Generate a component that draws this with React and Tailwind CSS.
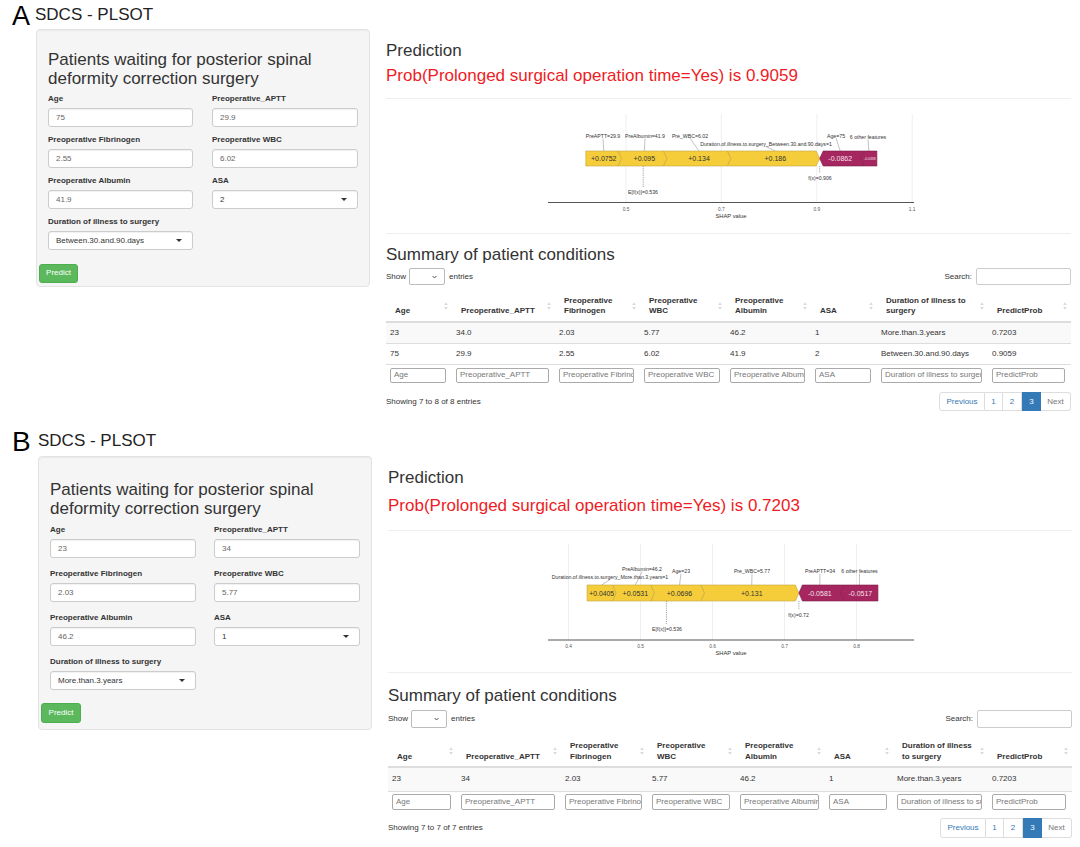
import React from "react";

const SVGFONT = "Liberation Sans, Arial, sans-serif";
const YEL = "#f5cd3b";
const YEL_S = "#c2a43c";
const MAG = "#a6265f";
const MAG_S = "#7d1c47";

function ForcePlot({ c }) {
  const X = c.x;
  const { t, b, d } = c;
  const m = (t + b) / 2;
  const sumPos = c.pos.reduce((s, p) => s + p.v, 0);
  let cur = c.f - sumPos;
  const posB = c.pos.map((p, i) => {
    const x0 = X(cur);
    cur += p.v;
    const x1 = X(cur);
    return { ...p, x0, x1, first: i === 0 };
  });
  cur = c.f;
  const negB = c.neg.map((p, i) => {
    const x0 = X(cur);
    cur += p.v;
    const x1 = X(cur);
    return { ...p, x0, x1, last: i === c.neg.length - 1 };
  });
  const all = [...posB, ...negB];
  const posPoly = (p) => {
    const pts = [];
    pts.push(p.first ? [p.x0, t] : [p.x0 - d, t]);
    pts.push([p.x1 - d, t], [p.x1, m], [p.x1 - d, b]);
    pts.push(p.first ? [p.x0, b] : [p.x0 - d, b]);
    if (!p.first) pts.push([p.x0, m]);
    return pts.map((q) => q.join(",")).join(" ");
  };
  const negPoly = (p) => {
    const pts = [[p.x0, m], [p.x0 + d, t]];
    if (p.last) pts.push([p.x1, t], [p.x1, b]);
    else pts.push([p.x1 + d, t], [p.x1, m], [p.x1 + d, b]);
    pts.push([p.x0 + d, b]);
    return pts.map((q) => q.join(",")).join(" ");
  };
  const ex = X(c.e);
  const fx = X(c.f);
  return (
    <svg
      width={c.w}
      height={c.h}
      viewBox={`${c.vx} ${c.vy} ${c.w} ${c.h}`}
      className={c.cls}
      fontFamily={SVGFONT}
    >
      {c.ticks.map((tk) => (
        <line key={"g" + tk} x1={X(tk)} x2={X(tk)} y1={c.gridTop} y2={c.axisY} stroke="#ebebeb" strokeWidth="0.8" />
      ))}
      <line x1={c.ax0} x2={c.ax1} y1={c.axisY} y2={c.axisY} stroke="#555" strokeWidth="1" />
      {c.ticks.map((tk) => (
        <text key={"t" + tk} x={X(tk)} y={c.tickY} fontSize="4.8" fill="#555" textAnchor="middle" dominantBaseline="central">
          {tk.toFixed(1)}
        </text>
      ))}
      <text x={c.titleX} y={c.titleY} fontSize="5.8" fill="#333" textAnchor="middle" dominantBaseline="central">
        SHAP value
      </text>
      {c.labels.map((l, i) => {
        const bar = all[l.bar];
        const bc = (bar.x0 + bar.x1) / 2;
        return (
          <g key={"l" + i}>
            <line x1={l.x} y1={l.y + 2.6} x2={bc} y2={t} stroke="#777" strokeWidth="0.45" />
            <text x={l.x} y={l.y} fontSize="5.2" fill="#333" textAnchor="middle" dominantBaseline="central">
              {l.t}
            </text>
          </g>
        );
      })}
      {posB.map((p, i) => (
        <polygon key={"p" + i} points={posPoly(p)} fill={YEL} stroke={YEL_S} strokeWidth="0.6" />
      ))}
      {negB.map((p, i) => (
        <polygon key={"n" + i} points={negPoly(p)} fill={MAG} stroke={MAG_S} strokeWidth="0.6" />
      ))}
      {posB.map((p, i) => (
        <text key={"pt" + i} x={(p.x0 + p.x1) / 2} y={m + 0.3} fontSize={p.fs || 7} fill="#333" textAnchor="middle" dominantBaseline="central">
          {p.s}
        </text>
      ))}
      {negB.map((p, i) => (
        <text key={"nt" + i} x={(p.x0 + p.x1) / 2 + (p.dx || 0)} y={m + 0.3} fontSize={p.fs || 7} fill="#f4e4ec" textAnchor="middle" dominantBaseline="central">
          {p.s}
        </text>
      ))}
      <line x1={ex} x2={ex} y1={b} y2={c.eLine} stroke="#666" strokeWidth="0.6" strokeDasharray="1.2 1" />
      <text x={c.eX} y={c.eY} fontSize="5.2" fill="#333" textAnchor="middle" dominantBaseline="central">
        E[f(x)]={c.e.toFixed(3)}
      </text>
      <line x1={fx} x2={fx} y1={b} y2={c.fLine} stroke="#666" strokeWidth="0.6" strokeDasharray="1 0.8" />
      <text x={c.fX} y={c.fY} fontSize="5.2" fill="#333" textAnchor="middle" dominantBaseline="central">
        {c.fText}
      </text>
    </svg>
  );
}

const plotA = {
  cls: "block ml-[154px]",
  vx: 540,
  vy: 99,
  w: 400,
  h: 134,
  x: (v) => 626 + (v - 0.5) * 477,
  ticks: [0.5, 0.7, 0.9, 1.1],
  gridTop: 114,
  axisY: 202.5,
  ax0: 548,
  ax1: 914,
  tickY: 209,
  titleX: 731,
  titleY: 216,
  t: 151,
  b: 166,
  d: 3.5,
  f: 0.906,
  e: 0.536,
  pos: [
    { v: 0.0752, s: "+0.0752" },
    { v: 0.095, s: "+0.095" },
    { v: 0.134, s: "+0.134" },
    { v: 0.186, s: "+0.186" },
  ],
  neg: [
    { v: 0.0862, s: "-0.0862" },
    { v: 0.0338, s: "-0.0338", fs: 3.4, dx: 1 },
  ],
  labels: [
    { t: "PreAPTT=29.9", x: 603, y: 136, bar: 0 },
    { t: "PreAlbumin=41.9", x: 645, y: 136, bar: 1 },
    { t: "Pre_WBC=6.02", x: 690, y: 135.5, bar: 2 },
    { t: "Duration.of.illness.to.surgery_Between.30.and.90.days=1", x: 766, y: 144, bar: 3 },
    { t: "Age=75", x: 836, y: 135.5, bar: 4 },
    { t: "6 other features", x: 868, y: 137, bar: 5 },
  ],
  eLine: 187,
  eX: 643,
  eY: 192,
  fLine: 173,
  fX: 820,
  fY: 178,
  fText: "f(x)=0.906",
};

const plotB = {
  cls: "block ml-[152px]",
  vx: 540,
  vy: 531,
  w: 400,
  h: 141,
  x: (v) => 640.5 + (v - 0.5) * 720,
  ticks: [0.4, 0.5, 0.6, 0.7, 0.8],
  gridTop: 544,
  axisY: 640,
  ax0: 548,
  ax1: 914,
  tickY: 646,
  titleX: 731,
  titleY: 653,
  t: 585,
  b: 601,
  d: 3.5,
  f: 0.72,
  e: 0.536,
  pos: [
    { v: 0.0405, s: "+0.0405", fs: 6.8 },
    { v: 0.0531, s: "+0.0531" },
    { v: 0.0696, s: "+0.0696" },
    { v: 0.131, s: "+0.131" },
  ],
  neg: [
    { v: 0.0581, s: "-0.0581" },
    { v: 0.0517, s: "-0.0517", dx: 1 },
  ],
  labels: [
    { t: "Duration.of.illness.to.surgery_More.than.3.years=1", x: 610, y: 577, bar: 0 },
    { t: "PreAlbumin=46.2", x: 642, y: 569, bar: 1 },
    { t: "Age=23", x: 681, y: 571, bar: 2 },
    { t: "Pre_WBC=5.77", x: 752, y: 571, bar: 3 },
    { t: "PreAPTT=34", x: 820, y: 571, bar: 4 },
    { t: "6 other features", x: 859.5, y: 571, bar: 5 },
  ],
  eLine: 624,
  eX: 667,
  eY: 629,
  fLine: 610,
  fX: 798.5,
  fY: 615,
  fText: "f(x)=0.72",
};

function Caret() {
  return <span className="block w-0 h-0 border-l-[3px] border-r-[3px] border-t-[3px] border-l-transparent border-r-transparent border-t-[#333]" />;
}

function Field({ label, value, select }) {
  return (
    <div className="flex flex-col">
      <div className="text-[8px] leading-[10px] font-bold text-[#333] whitespace-nowrap">{label}</div>
      <div
        className={`mt-[4px] h-[19px] bg-white border border-[#cccccc] rounded-[3px] flex items-center justify-between pl-[7px] pr-[10px] text-[8px] shadow-[inset_0_1px_1px_rgba(0,0,0,0.06)] ${
          select ? "text-[#333]" : "text-[#666]"
        }`}
      >
        <span>{value}</span>
        {select && <Caret />}
      </div>
    </div>
  );
}

function Well({ w }) {
  return (
    <div className={w.cls}>
      <h3 className="text-[17px] leading-[1.1] text-[#333] pl-[11px] font-normal">
        Patients waiting for posterior spinal
        <br />
        deformity correction surgery
      </h3>
      <div className={w.gridCls}>
        <Field label="Age" value={w.v[0]} />
        <Field label="Preoperative_APTT" value={w.v[1]} />
        <Field label="Preoperative Fibrinogen" value={w.v[2]} />
        <Field label="Preoperative WBC" value={w.v[3]} />
        <Field label="Preoperative Albumin" value={w.v[4]} />
        <Field label="ASA" value={w.v[5]} select />
        <Field label="Duration of illness to surgery" value={w.v[6]} select />
      </div>
      <div className={w.btnCls}>
        <button className={w.btn}>Predict</button>
      </div>
    </div>
  );
}

function SortIcon() {
  return (
    <svg width="4" height="8" viewBox="0 0 4 8" className="shrink-0">
      <path d="M2 0.3 L3.8 3 L0.2 3 Z" fill="#d9d9d9" />
      <path d="M2 7.7 L3.8 5 L0.2 5 Z" fill="#d9d9d9" />
    </svg>
  );
}

function Chevron() {
  return (
    <svg width="5" height="4" viewBox="0 0 5 4">
      <polyline points="0.6,1 2.5,3 4.4,1" fill="none" stroke="#444" strokeWidth="0.9" />
    </svg>
  );
}

function DataTable({ t }) {
  return (
    <div className="flex flex-col text-[8px] text-[#333]">
      <div className={`${t.showCls} flex items-center justify-between`}>
        <div className="flex items-center h-full">
          <span>Show</span>
          <span className="ml-[3px] w-[36px] h-full bg-white border border-[#bbb] rounded-[2px] flex items-center justify-end pr-[7px]">
            <Chevron />
          </span>
          <span className="ml-[4px]">entries</span>
        </div>
        <div className="flex items-center h-full">
          <span>Search:</span>
          <span className="ml-[4px] w-[95px] h-full bg-white border border-[#ccc] rounded-[2px]" />
        </div>
      </div>
      <table className="w-full table-fixed border-collapse">
        <colgroup>
          {t.cols.map((c, i) => (
            <col key={i} className={c} />
          ))}
        </colgroup>
        <thead>
          <tr>
            {t.headers.map((h, i) => (
              <th key={i} className={`${t.thPad} pl-[9px] pr-[4px] text-left font-bold align-bottom border-b-2 border-[#dddddd]`}>
                <div className={`flex items-center justify-between ${t.thH}`}>
                  <div className={`self-end ${t.thLead} whitespace-nowrap`}>
                    {h.map((l, j) => (
                      <div key={j}>{l}</div>
                    ))}
                  </div>
                  <SortIcon />
                </div>
              </th>
            ))}
          </tr>
        </thead>
        <tbody>
          {t.rows.map((r, ri) => (
            <tr key={ri} className={ri % 2 === 0 ? "bg-[#f9f9f9]" : "bg-white"}>
              {r.map((v, ci) => (
                <td key={ci} className={`${t.rowH} py-0 pl-[4px] whitespace-nowrap ${ri > 0 ? "border-t border-[#dddddd]" : ""}`}>
                  {v}
                </td>
              ))}
            </tr>
          ))}
          <tr>
            {t.filters.map((f, i) => (
              <td key={i} className={`${t.filterH} py-0 pl-[4px] pr-[6px] border-t border-[#dddddd]`}>
                <div className={`${t.inputH} bg-white border border-[#aaaaaa] rounded-[2px] pl-[3px] flex items-center text-[#777] overflow-hidden whitespace-nowrap`}>
                  {f}
                </div>
              </td>
            ))}
          </tr>
        </tbody>
      </table>
      <div className={`${t.footCls} flex items-center justify-between`}>
        <span>{t.showing}</span>
        <div className="flex h-full">
          <span className="w-[46px] h-full flex items-center justify-center border border-[#dddddd] rounded-l-[3px] text-[#337ab7]">Previous</span>
          <span className="w-[18px] h-full flex items-center justify-center border-y border-r border-[#dddddd] text-[#337ab7]">1</span>
          <span className="w-[19px] h-full flex items-center justify-center border-y border-r border-[#dddddd] text-[#337ab7]">2</span>
          <span className="w-[19px] h-full flex items-center justify-center bg-[#337ab7] border-y border-[#337ab7] text-white">3</span>
          <span className="w-[30px] h-full flex items-center justify-center border-y border-r border-[#dddddd] rounded-r-[3px] text-[#777]">Next</span>
        </div>
      </div>
    </div>
  );
}

const headersA = [
  ["Age"],
  ["Preoperative_APTT"],
  ["Preoperative", "Fibrinogen"],
  ["Preoperative", "WBC"],
  ["Preoperative", "Albumin"],
  ["ASA"],
  ["Duration of illness to", "surgery"],
  ["PredictProb"],
];
const headersB = [
  ["Age"],
  ["Preoperative_APTT"],
  ["Preoperative", "Fibrinogen"],
  ["Preoperative", "WBC"],
  ["Preoperative", "Albumin"],
  ["ASA"],
  ["Duration of illness", "to surgery"],
  ["PredictProb"],
];
const filters = [
  "Age",
  "Preoperative_APTT",
  "Preoperative Fibrinogen",
  "Preoperative WBC",
  "Preoperative Albumin",
  "ASA",
  "Duration of illness to surgery",
  "PredictProb",
];

const tableA = {
  showCls: "mt-[5px] h-[17px]",
  cols: ["w-[66px]", "w-[103px]", "w-[85px]", "w-[86px]", "w-[85px]", "w-[66px]", "w-[111px]", "w-[83px]"],
  headers: headersA,
  thPad: "pt-[11px] pb-[5px]",
  thH: "h-[20px]",
  thLead: "leading-[10px]",
  rowH: "h-[21px]",
  filterH: "h-[22px]",
  inputH: "h-[15px]",
  rows: [
    ["23", "34.0", "2.03", "5.77", "46.2", "1", "More.than.3.years", "0.7203"],
    ["75", "29.9", "2.55", "6.02", "41.9", "2", "Between.30.and.90.days", "0.9059"],
  ],
  filters,
  footCls: "mt-[6px] h-[19px]",
  showing: "Showing 7 to 8 of 8 entries",
};

const tableB = {
  showCls: "mt-[6px] h-[18px]",
  cols: ["w-[69px]", "w-[104px]", "w-[87px]", "w-[88px]", "w-[89px]", "w-[68px]", "w-[95px]", "w-[84px]"],
  headers: headersB,
  thPad: "pt-[12px] pb-[4px]",
  thH: "h-[22px]",
  thLead: "leading-[11px]",
  rowH: "h-[24px]",
  filterH: "h-[22px]",
  inputH: "h-[16px]",
  rows: [["23", "34", "2.03", "5.77", "46.2", "1", "More.than.3.years", "0.7203"]],
  filters,
  footCls: "mt-[5px] h-[20px]",
  showing: "Showing 7 to 7 of 7 entries",
};

const sections = [
  {
    key: "A",
    secCls: "h-[427px] flex flex-col",
    letterCls: "ml-[12px] w-[23px] mt-[3px] text-[27px] leading-none text-black",
    titleCls: "mt-[6px] text-[17px] leading-none text-[#222]",
    well: {
      cls: "ml-[36px] w-[334px] h-[258px] shrink-0 bg-[#f5f5f5] border border-[#e3e3e3] rounded-[4px] pt-[21px] shadow-[inset_0_1px_1px_rgba(0,0,0,0.05)]",
      gridCls: "mt-[6px] pl-[11px] grid grid-cols-[145px_146px] gap-x-[19px] gap-y-[8px]",
      btnCls: "mt-[8px] pl-[2px]",
      btn: "w-[39px] h-[19px] bg-[#5cb85c] border border-[#4cae4c] rounded-[3px] text-white text-[8px] leading-none",
      v: ["75", "29.9", "2.55", "6.02", "41.9", "2", "Between.30.and.90.days"],
    },
    mainCls: "ml-[16px] w-[685px] flex flex-col",
    redMt: "mt-[8px]",
    hrMt: "mt-[14px]",
    sumMt: "mt-[12px]",
    prob: "0.9059",
    plot: plotA,
    table: tableA,
  },
  {
    key: "B",
    secCls: "h-[420px] flex flex-col",
    letterCls: "ml-[12px] w-[26px] mt-[1px] text-[28px] leading-none text-black",
    titleCls: "mt-[5px] text-[17px] leading-none text-[#222]",
    well: {
      cls: "ml-[38px] w-[334px] h-[274px] shrink-0 bg-[#f5f5f5] border border-[#e3e3e3] rounded-[4px] pt-[24px] shadow-[inset_0_1px_1px_rgba(0,0,0,0.05)]",
      gridCls: "mt-[7px] pl-[11px] grid grid-cols-[146px_146px] gap-x-[18px] gap-y-[11px]",
      btnCls: "mt-[8px] pl-[2px]",
      btn: "w-[40px] h-[20px] bg-[#5cb85c] border border-[#4cae4c] rounded-[3px] text-white text-[8px] leading-none",
      v: ["23", "34", "2.03", "5.77", "46.2", "1", "More.than.3.years"],
    },
    mainCls: "ml-[16px] w-[684px] flex flex-col",
    redMt: "mt-[11px]",
    hrMt: "mt-[16px]",
    sumMt: "mt-[14px]",
    prob: "0.7203",
    plot: plotB,
    table: tableB,
  },
];

function Section({ s }) {
  return (
    <section className={s.secCls}>
      <div className="flex items-start h-[29px] shrink-0">
        <span className={s.letterCls}>{s.key}</span>
        <span className={s.titleCls}>SDCS - PLSOT</span>
      </div>
      <div className="flex items-start">
        <Well w={s.well} />
        <div className={s.mainCls}>
          <div className="mt-[13px] text-[17px] leading-none text-[#333]">Prediction</div>
          <div className={`${s.redMt} text-[17px] leading-none text-[#ee1c25] whitespace-nowrap`}>
            Prob(Prolonged surgical operation time=Yes) is {s.prob}
          </div>
          <div className={`${s.hrMt} h-px bg-[#eeeeee]`} />
          <ForcePlot c={s.plot} />
          <div className="h-px bg-[#eeeeee]" />
          <div className={`${s.sumMt} text-[17px] leading-none text-[#333]`}>Summary of patient conditions</div>
          <DataTable t={s.table} />
        </div>
      </div>
    </section>
  );
}

export default function App() {
  return (
    <div className="w-[1080px] h-[847px] overflow-hidden bg-white text-[#333] font-['Liberation_Sans',Arial,sans-serif]">
      {sections.map((s) => (
        <Section key={s.key} s={s} />
      ))}
    </div>
  );
}
